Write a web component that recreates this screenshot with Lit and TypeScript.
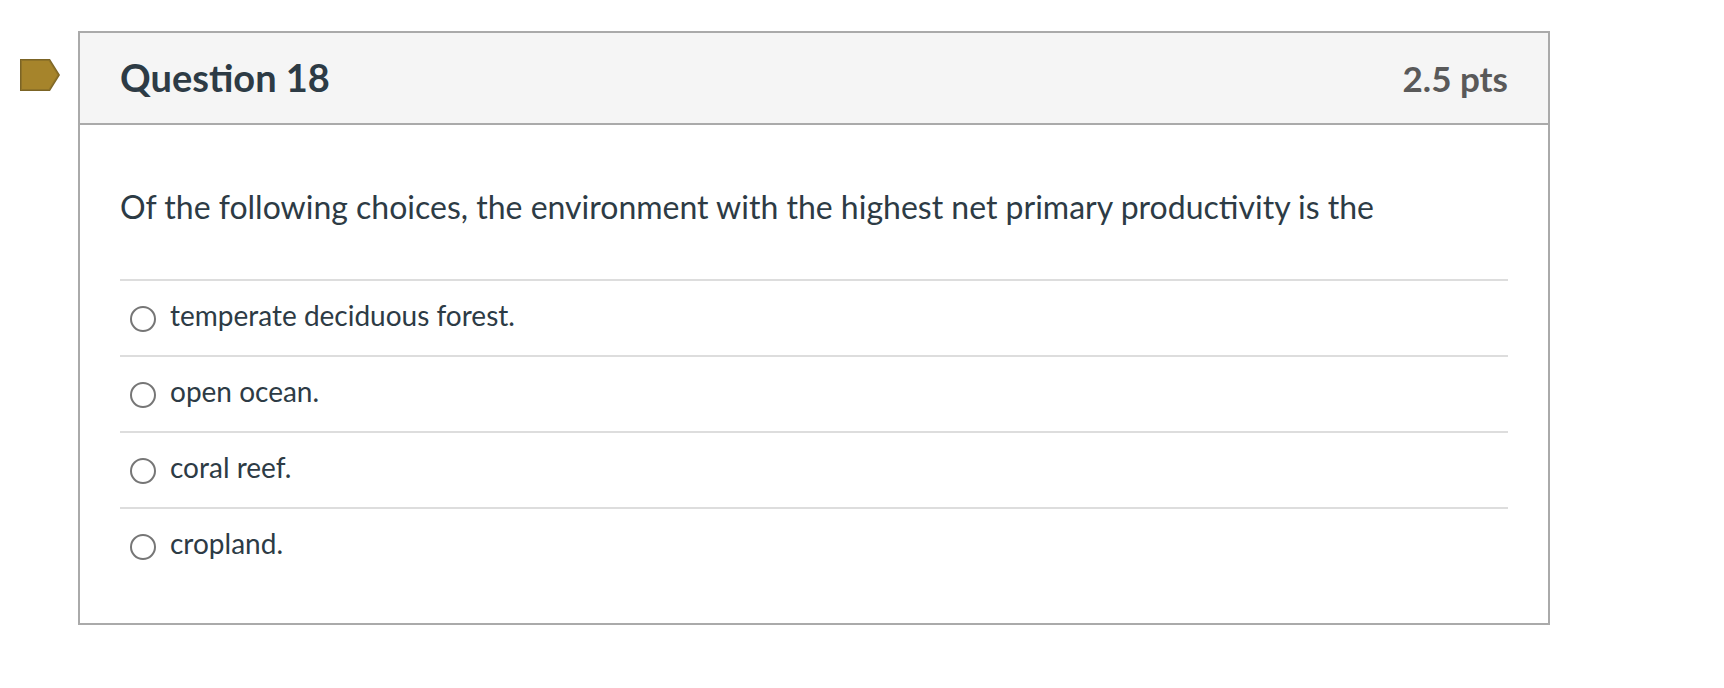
import { LitElement, html, css } from "lit";
import { customElement, property, state } from "lit/decorators.js";

@customElement("question-flag")
class QuestionFlag extends LitElement {
  @property({ type: Boolean }) marked = false;

  static styles = css`
    :host {
      display: block;
    }
    .flag {
      display: block;
      padding: 0;
      border: 0;
      background: none;
      cursor: pointer;
    }
    .shape {
      display: block;
      width: 40px;
      height: 32px;
    }
  `;

  render() {
    return html`
      <button
        class="flag"
        type="button"
        aria-label="Flag question"
        aria-pressed=${this.marked}
        @click=${() => (this.marked = !this.marked)}
      >
        <svg class="shape" viewBox="0 0 40 32" aria-hidden="true">
          <path d="M0 0H30L40 16L30 32H0Z" fill="#7b6425" />
          <path d="M1 1H29.4L38.8 16L29.4 31H1Z" fill="#8f7328" />
          <path d="M2 2H28.8L37.5 16L28.8 30H2Z" fill="#a6842b" />
        </svg>
      </button>
    `;
  }
}

@customElement("app-root")
class AppRoot extends LitElement {
  @state() private selected = "";

  private answers = [
    "temperate deciduous forest.",
    "open ocean.",
    "coral reef.",
    "cropland.",
  ];

  static styles = css`
    :host {
      display: block;
      font-family: Lato, "Liberation Sans", sans-serif;
      color: #2d3b45;
      background: #fff;
    }
    * {
      box-sizing: border-box;
    }
    .page {
      display: flex;
      align-items: flex-start;
      gap: 18px;
      padding: 31px 174px 40px 20px;
    }
    .marker {
      flex: none;
      padding-top: 28px;
    }
    .card {
      flex: 1;
      min-width: 0;
      border: 2px solid #aaa;
    }
    .header {
      display: flex;
      justify-content: space-between;
      align-items: baseline;
      padding: 19px 40px 21px;
      border-bottom: 2px solid #aaa;
      background: #f5f5f5;
    }
    .title {
      margin: 0;
      font-size: 38px;
      line-height: 50px;
      font-weight: 700;
    }
    .points {
      font-size: 35px;
      line-height: 40px;
      font-weight: 700;
      color: #595959;
    }
    .body {
      padding: 58px 40px 40px;
    }
    .prompt {
      margin: 0 0 48px;
      font-size: 32px;
      line-height: 48px;
    }
    .answers {
      margin: 0;
      padding: 0;
      border: 0;
      min-width: 0;
    }
    .answer {
      display: flex;
      align-items: flex-start;
      gap: 14px;
      padding: 14px 10px 20px;
      border-top: 2px solid #ddd;
      font-size: 28px;
      line-height: 40px;
      cursor: pointer;
    }
    .radio {
      appearance: none;
      flex: none;
      width: 26px;
      height: 26px;
      margin: 11px 0 0;
      border: 2px solid #767676;
      border-radius: 50%;
      background: #fff;
    }
    .radio:checked {
      background: radial-gradient(#0075ff 7px, #fff 8px);
      border-color: #0075ff;
    }
  `;

  render() {
    return html`
      <main class="page">
        <question-flag class="marker"></question-flag>
        <section class="card" aria-labelledby="title">
          <header class="header">
            <h2 class="title" id="title">Question 18</h2>
            <span class="points">2.5 pts</span>
          </header>
          <div class="body">
            <p class="prompt" id="prompt">
              Of the following choices, the environment with the highest net
              primary productivity is the
            </p>
            <fieldset class="answers" aria-labelledby="prompt">
              ${this.answers.map(
                (text, i) => html`
                  <label class="answer" for="answer-${i}">
                    <input
                      class="radio"
                      type="radio"
                      name="answer"
                      id="answer-${i}"
                      .checked=${this.selected === text}
                      @change=${() => (this.selected = text)}
                    />
                    <span>${text}</span>
                  </label>
                `,
              )}
            </fieldset>
          </div>
        </section>
      </main>
    `;
  }
}
